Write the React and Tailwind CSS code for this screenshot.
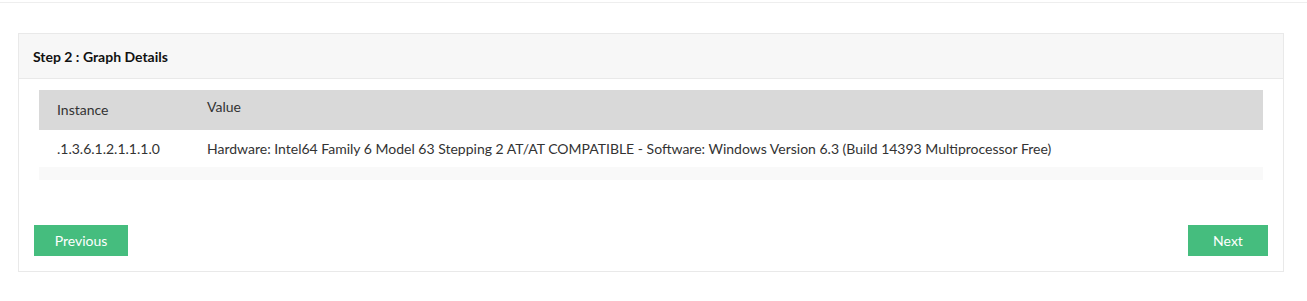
export default function App() {
  return (
    <div className="w-[1307px] h-[301px] bg-white text-[#333] text-[14px]" style={{ fontFamily: "Lato, 'Open Sans', sans-serif" }}>
      <div className="h-[3px] border-b border-[#eeeeee]" />
      <div className="ml-[18px] mt-[30px] w-[1266px] border border-[#e9e9e9] bg-white">
        <div className="h-[45px] bg-[#f7f7f7] border-b border-[#e9e9e9] flex items-center pl-[14px] pt-[1px]">
          <span className="font-bold text-[14px] text-[#111]">Step 2 : Graph Details</span>
        </div>
        <div className="pt-[11px] px-[20px]">
          <table className="w-full border-collapse">
            <thead>
              <tr className="bg-[#d9d9d9] h-[40px]">
                <th className="w-[168px] text-left font-normal pl-[18px] pb-[2px]">Instance</th>
                <th className="text-left font-normal pb-[7px]">Value</th>
              </tr>
            </thead>
            <tbody>
              <tr className="h-[37px]">
                <td className="pl-[18px]">.1.3.6.1.2.1.1.1.0</td>
                <td>Hardware: Intel64 Family 6 Model 63 Stepping 2 AT/AT COMPATIBLE - Software: Windows Version 6.3 (Build 14393 Multiprocessor Free)</td>
              </tr>
              <tr className="h-[13px] bg-[#f9f9f9]">
                <td />
                <td />
              </tr>
            </tbody>
          </table>
        </div>
        <div className="flex justify-between pl-[15px] pr-[15px] pt-[45px] pb-[15px]">
          <button className="h-[31px] w-[94px] bg-[#45bd7e] text-white text-[14px]">Previous</button>
          <button className="h-[31px] w-[80px] bg-[#45bd7e] text-white text-[14px]">Next</button>
        </div>
      </div>
    </div>
  );
}
